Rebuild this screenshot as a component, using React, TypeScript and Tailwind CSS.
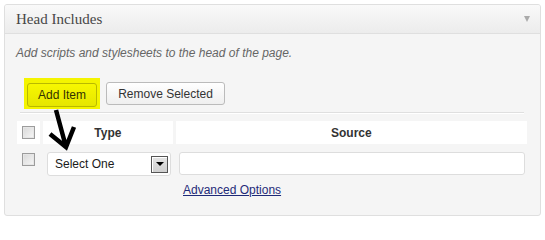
import React from "react";

/** Small classic-style checkbox */
function Check() {
  return (
    <span className="block w-[13px] h-[13px] border border-[#9c9c9c] bg-gradient-to-br from-[#d8d8d8] to-[#f7f7f7] shadow-[inset_0_0_0_1px_#e6e6e6]" />
  );
}

/** Head Includes meta box */
export default function App() {
  return (
    <div className="w-[545px] h-[219px] bg-white pt-[4px] pl-[4px] pr-[4px] font-['Liberation_Sans',Arial,sans-serif]">
      <div className="relative w-[537px] h-[212px] border border-[#dfdfdf] rounded-[3px] bg-[#f5f5f5] overflow-hidden">
        {/* header */}
        <div className="h-[29px] flex items-center justify-between pl-[11px] pr-[10px] bg-gradient-to-b from-[#f9f9f9] to-[#ececec] border-b border-[#dfdfdf]">
          <h3 className="text-[15px] text-[#464646] font-['Liberation_Serif','Times_New_Roman',serif] leading-none">
            Head Includes
          </h3>
          <span className="w-0 h-0 border-l-[3px] border-r-[3px] border-t-[6px] border-l-transparent border-r-transparent border-t-[#aaaaaa]" />
        </div>

        {/* body */}
        <div className="pl-[11px] pr-[13px] pt-[10px]">
          <p className="text-[12px] leading-[18px] italic text-[#666666]">
            Add scripts and stylesheets to the head of the page.
          </p>

          {/* buttons */}
          <div className="mt-[16px] flex items-start gap-[6px] pl-[8px]">
            <div className="bg-[#f4f400] pt-[4px] pb-[2px] px-[3px]">
              <button className="h-[24px] w-[70px] rounded-[3px] border border-[#b9b900] bg-gradient-to-b from-[#f7f700] to-[#e6e600] text-[12px] text-[#333300]">
                Add Item
              </button>
            </div>
            <button className="mt-[4px] h-[23px] w-[119px] rounded-[3px] border border-[#bbbbbb] bg-gradient-to-b from-white to-[#efefef] text-[12px] text-[#333333]">
              Remove Selected
            </button>
          </div>

          {/* separator */}
          <div className="mt-[3px] ml-[4px] mr-[3px] h-px bg-[#dfdfdf] shadow-[0_1px_0_#ffffff]" />

          {/* table header */}
          <div className="mt-[8px] ml-[1px] flex gap-[3px] text-[12px] font-bold text-[#333333]">
            <div className="w-[23px] h-[23px] bg-white flex items-center justify-center">
              <Check />
            </div>
            <div className="w-[130px] h-[23px] bg-white flex items-center justify-center">Type</div>
            <div className="w-[352px] h-[23px] bg-white flex items-center justify-center">Source</div>
          </div>

          {/* row */}
          <div className="mt-[8px] ml-[1px] flex items-start">
            <div className="w-[23px] pt-[1px] flex justify-center">
              <Check />
            </div>
            <div className="ml-[7px] w-[124px] h-[24px] bg-white border border-[#dddddd] rounded-[3px] flex items-center justify-between pl-[7px] pr-[2px]">
              <span className="text-[12px] text-[#1a1a1a]">Select One</span>
              <span className="w-[17px] h-[17px] border border-[#555555] bg-gradient-to-b from-[#e4e4e4] to-[#cfcfcf] shadow-[inset_1px_1px_0_#ffffff] flex items-center justify-center">
                <span className="w-0 h-0 border-l-[4px] border-r-[4px] border-t-[4px] border-l-transparent border-r-transparent border-t-black" />
              </span>
            </div>
            <div className="ml-[8px] w-[346px] h-[23px] bg-white border border-[#dddddd] rounded-[3px]" />
          </div>

          {/* link */}
          <a href="#" className="block mt-[7px] ml-[167px] w-fit text-[12px] leading-[14px] text-[#1f2a78] underline">
            Advanced Options
          </a>
        </div>

        {/* hand-drawn arrow */}
        <svg className="absolute left-[40px] top-[101px]" width="34" height="46" viewBox="0 0 34 46">
          <path d="M11 4 L21 41 M5 28 L21 41 L29 21" fill="none" stroke="#000" strokeWidth="4.5" strokeLinejoin="miter" />
        </svg>
      </div>
    </div>
  );
}
